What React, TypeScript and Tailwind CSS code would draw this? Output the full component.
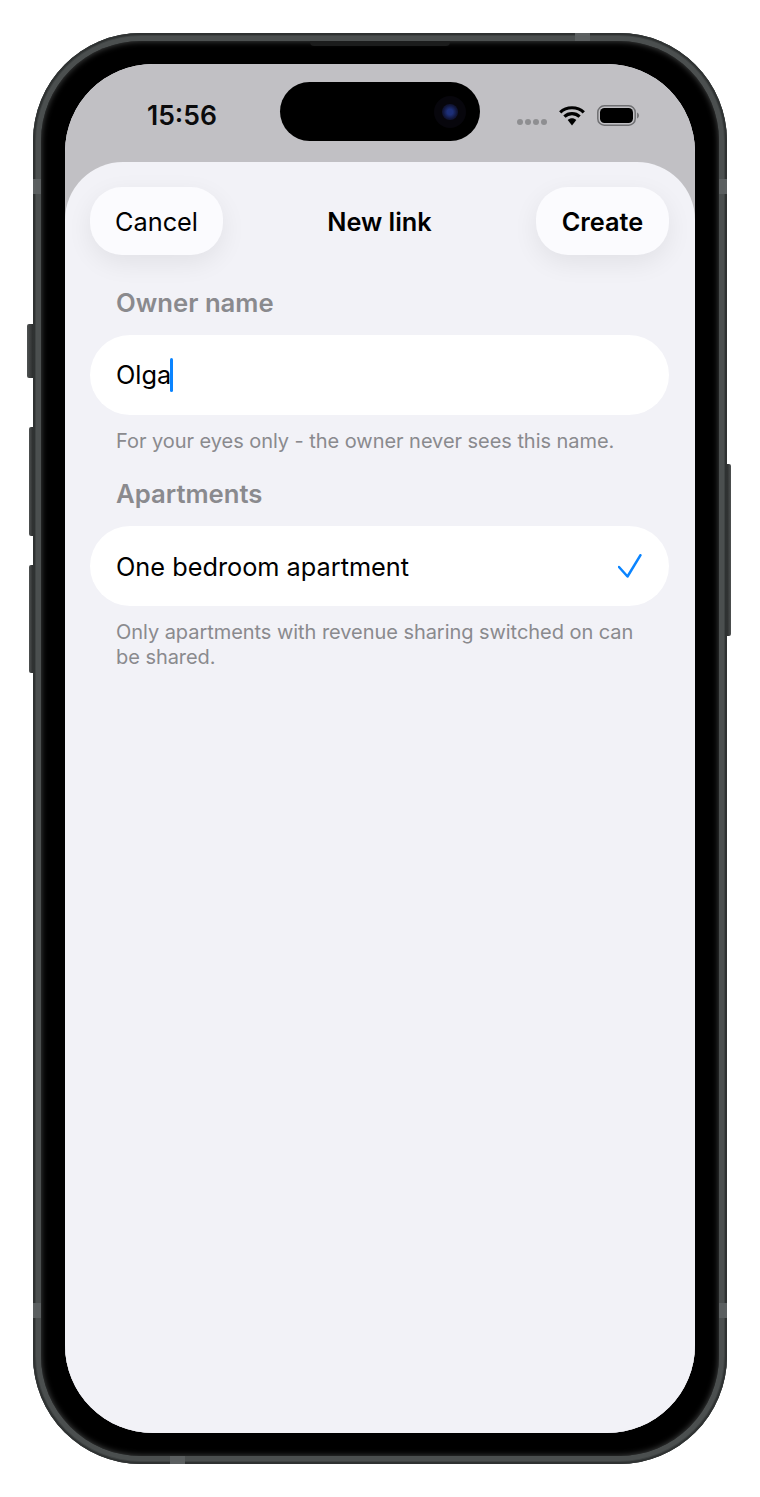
const FONT_CLASS = "font-['Inter','Liberation_Sans',sans-serif]";

const SIDE_BUTTON_CLASS =
  "absolute rounded-l-[2px] bg-gradient-to-r from-[#4f5252] to-[#2c2e2e]";

const SIDE_BUTTON_RIGHT_CLASS =
  "absolute rounded-r-[2px] bg-gradient-to-l from-[#4f5252] to-[#2c2e2e]";

const ANTENNA_CLASS = "absolute bg-[#5b5f60]";

function WifiIcon() {
  return (
    <svg width="26" height="21" viewBox="0 0 26 21" fill="none">
      <path d="M1.2 7.4C7.6 1.2 18.4 1.2 24.8 7.4" stroke="#000" strokeWidth="3.2" />
      <path d="M5.4 11.6C9.6 7.6 16.4 7.6 20.6 11.6" stroke="#000" strokeWidth="3.2" />
      <path d="M8.7 15 13 20.4 17.3 15C14.8 12.8 11.2 12.8 8.7 15Z" fill="#000" />
    </svg>
  );
}

function BatteryIcon() {
  return (
    <svg width="43" height="21" viewBox="0 0 43 21" fill="none">
      <rect x="0.8" y="0.8" width="37.4" height="19.4" rx="6.5" stroke="#6f6f72" strokeWidth="1.5" />
      <rect x="3" y="3" width="33" height="15" rx="4.5" fill="#000" />
      <path d="M40 7.5C41.4 8 42 9.2 42 10.5 42 11.8 41.4 13 40 13.5Z" fill="#77777a" />
    </svg>
  );
}

function CheckIcon() {
  return (
    <svg width="24" height="25" viewBox="0 0 24 25" fill="none">
      <path
        d="M1 13 9.5 22.5 22.5 1.2"
        stroke="#0a84ff"
        strokeWidth="2.5"
        strokeLinecap="round"
        strokeLinejoin="round"
      />
    </svg>
  );
}

function StatusBar() {
  return (
    <div className="relative flex h-[98px] shrink-0 items-start justify-between bg-[#c1c0c4] pl-[82px] pr-[55px]">
      <span className="mt-[34px] text-[26.5px] font-semibold leading-[34px] text-[#0b0b0c]">15:56</span>

      {/* Dynamic island */}
      <div className="absolute left-[215px] top-[18px] flex h-[59px] w-[200px] items-center justify-end rounded-full bg-black pr-[14px]">
        <div className="flex h-[32px] w-[32px] items-center justify-center rounded-full bg-[#07060c]">
          <div className="h-[16px] w-[16px] rounded-full bg-[radial-gradient(circle,#1d2f78_25%,#11163a_60%,#0a0a18_100%)]" />
        </div>
      </div>

      <div className="mt-[41px] flex items-start">
        <div className="mr-[12px] mt-[14px] flex gap-[2px]">
          <span className="h-[6px] w-[6px] rounded-full bg-[#8e8e91]" />
          <span className="h-[6px] w-[6px] rounded-full bg-[#8e8e91]" />
          <span className="h-[6px] w-[6px] rounded-full bg-[#8e8e91]" />
          <span className="h-[6px] w-[6px] rounded-full bg-[#8e8e91]" />
        </div>
        <div className="mr-[12px]">
          <WifiIcon />
        </div>
        <BatteryIcon />
      </div>
    </div>
  );
}

function HeaderButton({ label, bold }: { label: string; bold?: boolean }) {
  return (
    <button
      className={
        "flex h-[68px] w-[133px] items-center justify-center rounded-[32px] bg-[#fbfbfe] pt-px text-[25.3px] text-black shadow-[0_8px_26px_rgba(0,0,0,0.07)] " +
        (bold ? "font-semibold" : "font-normal")
      }
    >
      {label}
    </button>
  );
}

function SheetHeader() {
  return (
    <div className="flex h-[68px] items-center justify-between">
      <HeaderButton label="Cancel" />
      <span className="pt-px text-[25.3px] font-semibold text-black">New link</span>
      <HeaderButton label="Create" bold />
    </div>
  );
}

function SectionLabel({ children }: { children: string }) {
  return (
    <div className="px-[26px] text-[25.7px] font-semibold leading-[32px] text-[#8a8a8e]">{children}</div>
  );
}

function Hint({ children }: { children: string }) {
  return <p className="px-[26px] text-[20px] leading-[25px] tracking-[-0.05px] text-[#8a8a8e]">{children}</p>;
}

export default function App() {
  return (
    <div className={"h-[1497px] w-[760px] overflow-hidden bg-white pl-[33px] pt-[33px] " + FONT_CLASS}>
      <div className="relative h-[1431px] w-[694px] rounded-[108px] bg-[#4b4f4f] p-[8px] shadow-[inset_0_0_0_2px_#2f3232,inset_0_0_0_3px_#3f4343]">
        {/* Side buttons */}
        <div className={SIDE_BUTTON_CLASS + " -left-[6px] top-[291px] h-[54px] w-[6px]"} />
        <div className={SIDE_BUTTON_CLASS + " -left-[4px] top-[394px] h-[109px] w-[4px]"} />
        <div className={SIDE_BUTTON_CLASS + " -left-[4px] top-[532px] h-[108px] w-[4px]"} />
        <div className={SIDE_BUTTON_RIGHT_CLASS + " -right-[4px] top-[431px] h-[172px] w-[4px]"} />

        {/* Antenna bands */}
        <div className={ANTENNA_CLASS + " left-0 top-[146px] h-[15px] w-[8px]"} />
        <div className={ANTENNA_CLASS + " right-0 top-[146px] h-[15px] w-[8px]"} />
        <div className={ANTENNA_CLASS + " left-0 top-[1270px] h-[15px] w-[8px]"} />
        <div className={ANTENNA_CLASS + " right-0 top-[1270px] h-[15px] w-[8px]"} />
        <div className={ANTENNA_CLASS + " left-[542px] top-0 h-[8px] w-[15px]"} />
        <div className={ANTENNA_CLASS + " bottom-0 left-[137px] h-[8px] w-[15px]"} />

        <div className="relative h-full w-full rounded-[100px] bg-black p-[23px_24px_23px] shadow-[inset_0_0_6px_#4a4c4c]">
          {/* Speaker notch */}
          <div className="absolute left-[269px] top-0 h-[5px] w-[140px] rounded-b-[4px] bg-[#1b1c1c]" />

          <div className="flex h-full flex-col overflow-hidden rounded-[88px] bg-[#f2f2f7]">
            <StatusBar />

            <div className="flex-1 bg-[#c1c0c4]">
              <div className="h-full rounded-t-[58px] bg-[#f2f2f7] pl-[25px] pr-[26px] pt-[25px]">
                <SheetHeader />

                <div className="mt-[32px]">
                  <SectionLabel>Owner name</SectionLabel>
                  <div className="mt-[16px] flex h-[80px] items-center rounded-[40px] bg-white px-[26px] text-[25.3px] text-black">
                    <span>Olga</span>
                    <span className="-ml-px h-[34px] w-[3px] shrink-0 rounded-full bg-[#0a84ff]" />
                  </div>
                  <div className="mt-[14px]">
                    <Hint>For your eyes only - the owner never sees this name.</Hint>
                  </div>
                </div>

                <div className="mt-[24px]">
                  <SectionLabel>Apartments</SectionLabel>
                  <div className="mt-[16px] flex h-[80px] items-center justify-between rounded-[40px] bg-white pl-[26px] pr-[27px] pt-px text-[25.3px] text-black">
                    <span>One bedroom apartment</span>
                    <CheckIcon />
                  </div>
                  <div className="mt-[14px]">
                    <Hint>Only apartments with revenue sharing switched on can be shared.</Hint>
                  </div>
                </div>
              </div>
            </div>
          </div>
        </div>
      </div>
    </div>
  );
}
